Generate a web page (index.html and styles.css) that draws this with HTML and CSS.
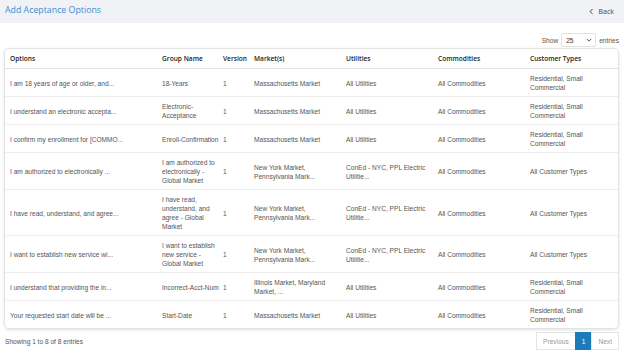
FILE: index.html
```html
<!DOCTYPE html>
<html>
<head>
  <meta charset="utf-8">
  <title>Add Aceptance Options</title>
  <link rel="stylesheet" href="styles.css">
</head>
<body>
  <div class="topbar">
    <h1 class="title">Add Aceptance Options</h1>
    <a class="back" href="#">
      <svg width="7" height="7" viewBox="0 0 10 10"><path d="M6.5 1.5 L3 5 L6.5 8.5" fill="none" stroke="#333" stroke-width="1.3"/></svg>
      Back
    </a>
  </div>

  <div class="content">
    <div class="length">
      Show
      <span class="select">25 <svg width="6" height="4" viewBox="0 0 8 5"><path d="M1 1 L4 4 L7 1" fill="none" stroke="#333" stroke-width="1.1"/></svg></span>
      entries
    </div>

    <div class="card">
      <table class="grid">
        <colgroup>
          <col style="width:152px">
          <col style="width:61px">
          <col style="width:31px">
          <col style="width:92px">
          <col style="width:92px">
          <col style="width:92px">
          <col>
        </colgroup>
        <thead>
          <tr>
            <th>Options</th>
            <th>Group Name</th>
            <th>Version</th>
            <th>Market(s)</th>
            <th>Utilities</th>
            <th>Commodities</th>
            <th>Customer Types</th>
          </tr>
        </thead>
        <tbody>
          <tr>
            <td>I am 18 years of age or older, and...</td>
            <td>18-Years</td>
            <td>1</td>
            <td>Massachusetts Market</td>
            <td>All Utilities</td>
            <td>All Commodities</td>
            <td>Residential, Small Commercial</td>
          </tr>
          <tr>
            <td>I understand an electronic accepta...</td>
            <td>Electronic-Acceptance</td>
            <td>1</td>
            <td>Massachusetts Market</td>
            <td>All Utilities</td>
            <td>All Commodities</td>
            <td>Residential, Small Commercial</td>
          </tr>
          <tr>
            <td>I confirm my enrollment for [COMMO...</td>
            <td class="nowrap">Enroll-Confirmation</td>
            <td>1</td>
            <td>Massachusetts Market</td>
            <td>All Utilities</td>
            <td>All Commodities</td>
            <td>Residential, Small Commercial</td>
          </tr>
          <tr>
            <td>I am authorized to electronically ...</td>
            <td>I am authorized to electronically - Global Market</td>
            <td>1</td>
            <td>New York Market, Pennsylvania Mark...</td>
            <td>ConEd - NYC, PPL Electric Utilitie...</td>
            <td>All Commodities</td>
            <td>All Customer Types</td>
          </tr>
          <tr>
            <td>I have read, understand, and agree...</td>
            <td>I have read, understand, and agree - Global Market</td>
            <td>1</td>
            <td>New York Market, Pennsylvania Mark...</td>
            <td>ConEd - NYC, PPL Electric Utilitie...</td>
            <td>All Commodities</td>
            <td>All Customer Types</td>
          </tr>
          <tr>
            <td>I want to establish new service wi...</td>
            <td>I want to establish new service - Global Market</td>
            <td>1</td>
            <td>New York Market, Pennsylvania Mark...</td>
            <td>ConEd - NYC, PPL Electric Utilitie...</td>
            <td>All Commodities</td>
            <td>All Customer Types</td>
          </tr>
          <tr>
            <td>I understand that providing the in...</td>
            <td class="nowrap">Incorrect-Acct-Num</td>
            <td>1</td>
            <td>Illinois Market, Maryland Market, ...</td>
            <td>All Utilities</td>
            <td>All Commodities</td>
            <td>Residential, Small Commercial</td>
          </tr>
          <tr>
            <td>Your requested start date will be ...</td>
            <td>Start-Date</td>
            <td>1</td>
            <td>Massachusetts Market</td>
            <td>All Utilities</td>
            <td>All Commodities</td>
            <td>Residential, Small Commercial</td>
          </tr>
        </tbody>
      </table>
    </div>

    <div class="footer">
      <div class="info">Showing 1 to 8 of 8 entries</div>
      <div class="pager">
        <span class="page-btn disabled">Previous</span>
        <span class="page-btn current">1</span>
        <span class="page-btn disabled">Next</span>
      </div>
    </div>
  </div>
</body>
</html>
```

FILE: styles.css
```css
body {
	margin: 0;
	background: #fff;
	font-family: "Liberation Sans", Arial, sans-serif;
	color: #555;
}

.topbar {
	display: flex;
	justify-content: space-between;
	align-items: center;
	height: 23px;
	padding: 0 10px 0 5px;
	background: #f0f2f5;
}

.title {
	margin: 0;
	font-family: "Open Sans", sans-serif;
	font-weight: 500;
	font-size: 8.8px;
	color: #3d8fd1;
	position: relative;
	top: -2px;
}

.back {
	display: flex;
	align-items: center;
	gap: 4px;
	font-family: "Open Sans", sans-serif;
	font-size: 7px;
	color: #444;
	text-decoration: none;
}

.content {
	padding: 10px 5px 0 4px;
}

.length {
	display: flex;
	justify-content: flex-end;
	align-items: center;
	gap: 3px;
	font-size: 6.6px;
	color: #555;
	height: 14px;
}

.select {
	display: flex;
	justify-content: space-between;
	align-items: center;
	width: 26px;
	height: 12px;
	padding: 0 3px 0 4px;
	border: 1px solid #e2e2e2;
	border-radius: 2px;
	color: #333;
}

.card {
	margin-top: 1px;
	border: 1px solid #e4e4e4;
	border-radius: 5px;
	box-shadow: 0 1px 3px rgba(0, 0, 0, 0.12);
	overflow: hidden;
}

.grid {
	width: 100%;
	border-collapse: collapse;
	table-layout: fixed;
	font-size: 6.6px;
	line-height: 9px;
}

.grid th {
	height: 19px;
	padding: 0 1px 0 5px;
	text-align: left;
	font-family: "Open Sans", sans-serif;
	font-weight: 600;
	font-size: 6.6px;
	color: #222;
	border-bottom: 1px solid #e3e3e3;
}

.grid td {
	padding: 5px 1px 4px 5px;
	height: 18px;
	vertical-align: middle;
	color: #555;
	border-bottom: 1px solid #ededed;
}

.grid tbody tr:last-child td {
	border-bottom: none;
}

.nowrap {
	white-space: nowrap;
}

.footer {
	display: flex;
	justify-content: space-between;
	align-items: center;
	margin-top: 3px;
}

.info {
	padding-left: 1px;
	font-size: 6.6px;
	color: #555;
}

.pager {
	display: flex;
}

.page-btn {
	display: flex;
	align-items: center;
	justify-content: center;
	height: 16px;
	padding: 0 6px;
	font-size: 6.6px;
	border: 1px solid #e6e6e6;
	margin-left: -1px;
}

.page-btn.disabled {
	color: #999;
}

.page-btn.current {
	background: #1c7cb9;
	border-color: #1c7cb9;
	color: #fff;
}
```
